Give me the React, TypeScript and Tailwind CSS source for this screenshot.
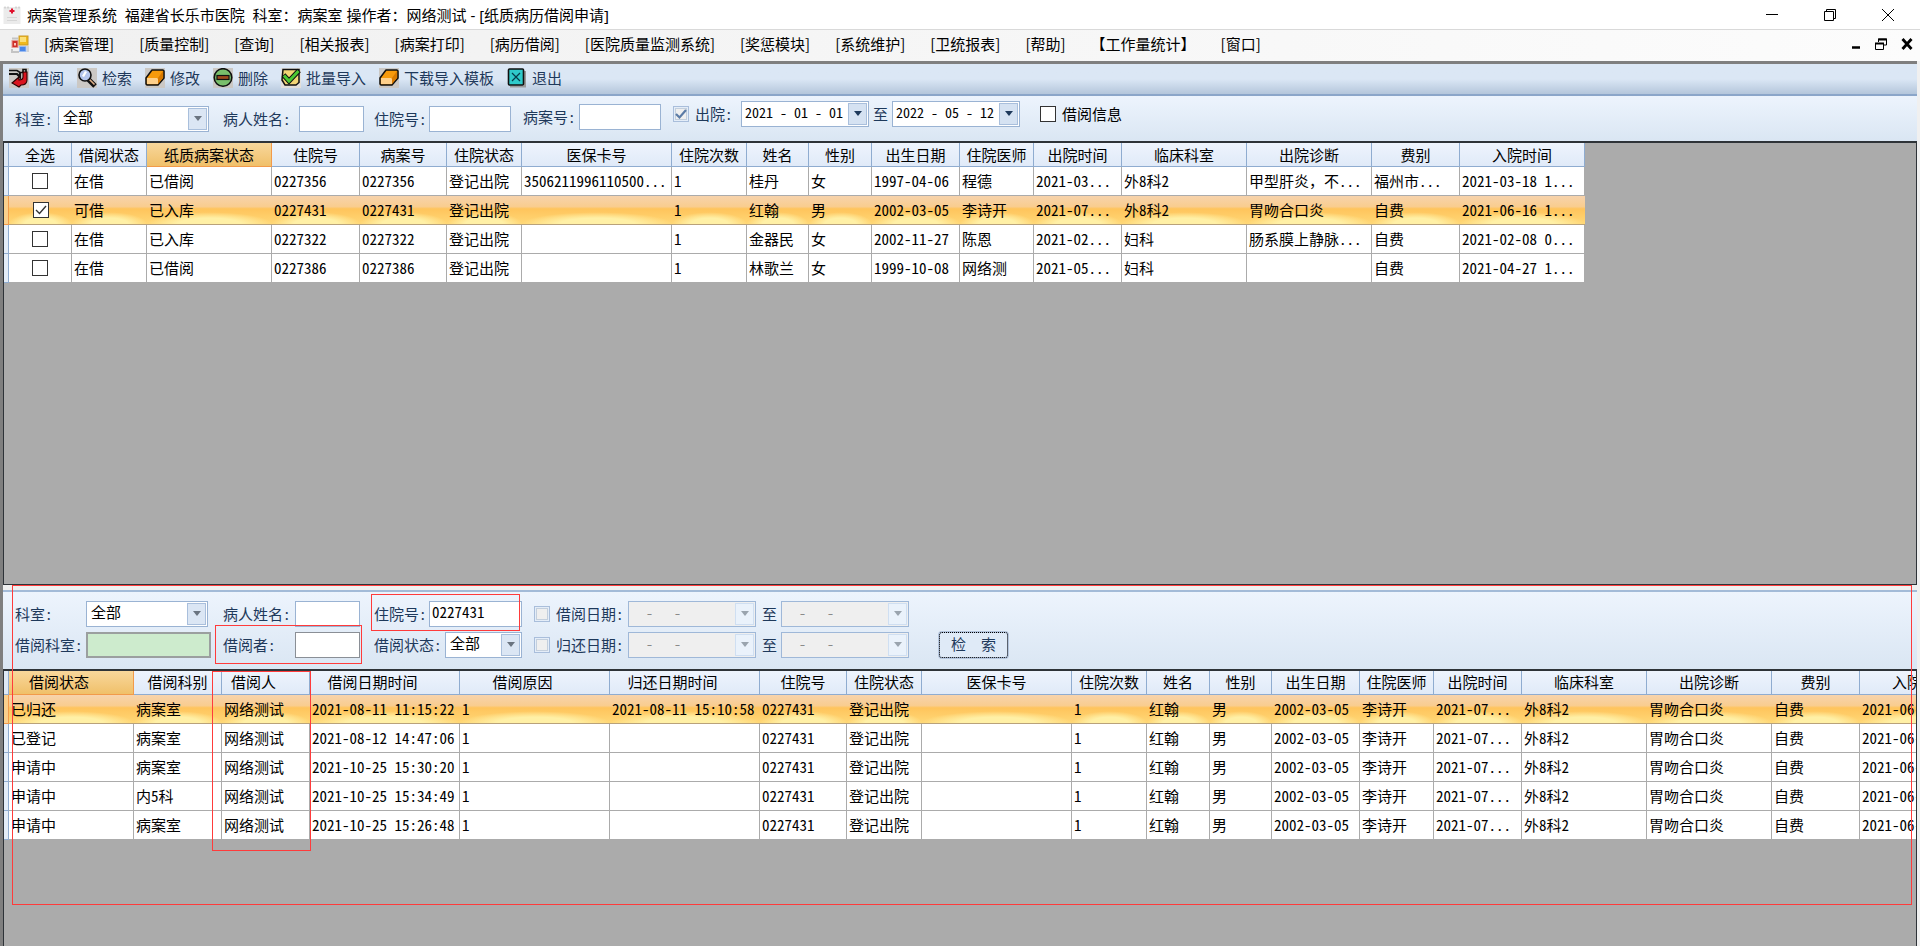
import type { ReactNode } from "react";

type Column = { title: string; width: number; sorted?: boolean; glyph?: boolean };

const MENUS = ["[病案管理]", "[质量控制]", "[查询]", "[相关报表]", "[病案打印]", "[病历借阅]", "[医院质量监测系统]", "[奖惩模块]", "[系统维护]", "[卫统报表]", "[帮助]", "【工作量统计】", "[窗口]"];

const TOP_COLUMNS: Column[] = [
  { title: "全选", width: 63 },
  { title: "借阅状态", width: 75 },
  { title: "纸质病案状态", width: 125, sorted: true },
  { title: "住院号", width: 88 },
  { title: "病案号", width: 87 },
  { title: "住院状态", width: 75 },
  { title: "医保卡号", width: 150 },
  { title: "住院次数", width: 75 },
  { title: "姓名", width: 62 },
  { title: "性别", width: 63 },
  { title: "出生日期", width: 88 },
  { title: "住院医师", width: 74 },
  { title: "出院时间", width: 88 },
  { title: "临床科室", width: 125 },
  { title: "出院诊断", width: 125 },
  { title: "费别", width: 88 },
  { title: "入院时间", width: 125 },
];

const TOP_ROWS = [
  ["在借", "已借阅", "0227356", "0227356", "登记出院", "3506211996110500...", "1", "桂丹", "女", "1997-04-06", "程德", "2021-03...", "外8科2", "甲型肝炎，不...", "福州市...", "2021-03-18 1..."],
  ["可借", "已入库", "0227431", "0227431", "登记出院", "", "1", "红翰", "男", "2002-03-05", "李诗开", "2021-07...", "外8科2", "胃吻合口炎", "自费", "2021-06-16 1..."],
  ["在借", "已入库", "0227322", "0227322", "登记出院", "", "1", "金器民", "女", "2002-11-27", "陈恩", "2021-02...", "妇科", "肠系膜上静脉...", "自费", "2021-02-08 0..."],
  ["在借", "已借阅", "0227386", "0227386", "登记出院", "", "1", "林歌兰", "女", "1999-10-08", "网络测", "2021-05...", "妇科", "", "自费", "2021-04-27 1..."],
];

const BOTTOM_COLUMNS: Column[] = [
  { title: "借阅状态", width: 125, sorted: true, glyph: true },
  { title: "借阅科别", width: 88 },
  { title: "借阅人", width: 88, glyph: true },
  { title: "借阅日期时间", width: 150, glyph: true },
  { title: "借阅原因", width: 150, glyph: true },
  { title: "归还日期时间", width: 150, glyph: true },
  { title: "住院号", width: 87 },
  { title: "住院状态", width: 75 },
  { title: "医保卡号", width: 150 },
  { title: "住院次数", width: 75 },
  { title: "姓名", width: 63 },
  { title: "性别", width: 62 },
  { title: "出生日期", width: 88 },
  { title: "住院医师", width: 74 },
  { title: "出院时间", width: 88 },
  { title: "临床科室", width: 125 },
  { title: "出院诊断", width: 125 },
  { title: "费别", width: 88 },
  { title: "入院时间", width: 125 },
];

const PATIENT = ["0227431", "登记出院", "", "1", "红翰", "男", "2002-03-05", "李诗开", "2021-07...", "外8科2", "胃吻合口炎", "自费", "2021-06-16 1..."];

const BOTTOM_ROWS = [
  ["已归还", "病案室", "网络测试", "2021-08-11 11:15:22", "1", "2021-08-11 15:10:58", ...PATIENT],
  ["已登记", "病案室", "网络测试", "2021-08-12 14:47:06", "1", "", ...PATIENT],
  ["申请中", "病案室", "网络测试", "2021-10-25 15:30:20", "1", "", ...PATIENT],
  ["申请中", "内5科", "网络测试", "2021-10-25 15:34:49", "1", "", ...PATIENT],
  ["申请中", "病案室", "网络测试", "2021-10-25 15:26:48", "1", "", ...PATIENT],
];

function AppIcon() {
  return (
    <svg viewBox="0 0 18 18" className="h-[18px] w-[18px]">
      <rect x="0.500" y="1" width="17" height="17" fill="#ebebeb" />
      <path d="M2 0.500v2M5 0.500v2M13 0.500v2M16 0.500v2" stroke="#bdbdbd" />
      <path d="M9 2.500v5M6.500 5h5" stroke="#e0102c" strokeWidth="2" />
      <path d="M4 11.500h10M4 14.500h10" stroke="#d6d6d6" />
    </svg>
  );
}

function FormIcon() {
  return (
    <svg viewBox="0 0 18 18" className="h-[18px] w-[18px]">
      <path d="M1 3.500h6M1 14v3h7" fill="none" stroke="#c4c4c4" strokeWidth="2" />
      <rect x="1" y="5.500" width="6" height="7" fill="#cf2f28" stroke="#e59a94" />
      <rect x="3" y="8" width="2" height="2.500" fill="#f8c5bf" />
      <rect x="8" y="1" width="9" height="9" fill="#f0b91c" stroke="#c99a2a" />
      <rect x="9" y="2" width="6" height="5" fill="#fbe07a" />
      <rect x="8.500" y="11.500" width="6.500" height="5" fill="#4a87e8" stroke="#9cbcf0" />
      <path d="M17 11v6" stroke="#b5b5b5" />
    </svg>
  );
}

function BorrowIcon() {
  return (
    <svg viewBox="0 0 20 20" className="h-5 w-5">
      <rect width="20" height="20" fill="#cbc8c4" />
      <path d="M0 2.500h8l3 2h3V1.500h3V6" fill="none" stroke="#111" strokeWidth="1.600" />
      <path d="M0 6h8l3 3V5" fill="none" stroke="#111" strokeWidth="2.200" />
      <path d="M14 4h4v8q0 5-6 5l-2 2-7-4 7-6v3q4 0 4-3z" fill="#d9141e" stroke="#2a0000" strokeWidth="1.100" />
    </svg>
  );
}

function SearchIcon() {
  return (
    <svg viewBox="0 0 20 20" className="h-5 w-5">
      <rect width="20" height="20" fill="#cbc8c4" />
      <path d="M11.500 11.500l6.500 6.500" stroke="#111" strokeWidth="5" />
      <path d="M12.500 11.500l5 5" stroke="#e0b088" strokeWidth="1.600" />
      <circle cx="8" cy="7" r="6" fill="#b5c6ee" stroke="#111" strokeWidth="1.600" />
      <path d="M5 8l3-5 2 1-3 5z" fill="#fff" />
    </svg>
  );
}

function EraserIcon() {
  return (
    <svg viewBox="0 0 20 20" className="h-5 w-5">
      <rect width="20" height="20" fill="#cbc8c4" />
      <path d="M1 10L7 2h11l1 1v7l-6 7H2l-1-1z" fill="#f79a0c" stroke="#111" strokeWidth="1.500" strokeLinejoin="round" />
      <path d="M2 10h10l1 1v5H2z" fill="#ffd08a" />
      <path d="M13 10l5-7v7l-5 6z" fill="#d97a00" />
    </svg>
  );
}

function DeleteIcon() {
  return (
    <svg viewBox="0 0 20 20" className="h-5 w-5">
      <rect width="20" height="20" fill="#cbc8c4" />
      <circle cx="10" cy="9.500" r="8.800" fill="#79bf6c" stroke="#111" strokeWidth="1.600" />
      <rect x="4" y="7.500" width="12" height="4" fill="#9b4a1c" stroke="#111" strokeWidth="1.200" />
    </svg>
  );
}

function CheckIcon() {
  return (
    <svg viewBox="0 0 20 20" className="h-5 w-5">
      <rect width="20" height="20" fill="#e2dfda" />
      <path d="M2 1.500h16v13l-3 2.500H4l-3-5z" fill="#f3d675" stroke="#111" strokeWidth="1.500" />
      <path d="M2.500 7l5.500 6L18 2.500" fill="none" stroke="#111" strokeWidth="5" />
      <path d="M3 7.500l5 5.500L17.500 3" fill="none" stroke="#4cc832" strokeWidth="3" />
    </svg>
  );
}

function ExitIcon() {
  return (
    <svg viewBox="0 0 20 20" className="h-5 w-5">
      <path d="M3 18.500h15V3" fill="none" stroke="#9a9a9a" strokeWidth="2" />
      <rect x="1.500" y="1" width="15" height="16" rx="1" fill="#2fcaca" stroke="#111" strokeWidth="1.600" />
      <path d="M5 5l8 8M13 5l-8 8" stroke="#063c4a" strokeWidth="1.200" />
    </svg>
  );
}

const TOOLS: { label: string; icon: ReactNode }[] = [
  { label: "借阅", icon: <BorrowIcon /> },
  { label: "检索", icon: <SearchIcon /> },
  { label: "修改", icon: <EraserIcon /> },
  { label: "删除", icon: <DeleteIcon /> },
  { label: "批量导入", icon: <CheckIcon /> },
  { label: "下载导入模板", icon: <EraserIcon /> },
  { label: "退出", icon: <ExitIcon /> },
];

function Arrow({ color = "#3d5f8c" }: { color?: string }) {
  return (
    <svg viewBox="0 0 8 5" className="h-[5px] w-2">
      <path d="M0 0h8L4 5z" fill={color} />
    </svg>
  );
}

function SelectBox({ id, className }: { id: string; className: string }) {
  return (
    <div className={`relative h-[26px] border border-[#9ab3d3] bg-white ${className}`}>
      <select id={id} className="h-full w-full appearance-none bg-transparent pb-1 pl-1 text-[15px] leading-5 text-black outline-none">
        <option>全部</option>
      </select>
      <span className="pointer-events-none absolute top-px right-px flex h-[22px] w-[19px] items-center justify-center border border-[#a9bfdc] bg-[#dbe6f4]">
        <Arrow color="#6a7480" />
      </span>
    </div>
  );
}

function DateBox({ label, value, disabled }: { label: string; value: string; disabled?: boolean }) {
  return (
    <div className={`flex h-[26px] w-32 border ${disabled ? "border-[#9fb8d8] bg-[#efefef]" : "border-[#9ab3d3] bg-white"}`}>
      <input
        aria-label={label}
        defaultValue={value}
        disabled={disabled}
        className="min-w-0 flex-1 bg-transparent pb-1 pl-[3px] text-sm whitespace-pre text-black outline-none disabled:text-[#8a8a8a]"
      />
      <button
        type="button"
        aria-label={`选择${label}`}
        disabled={disabled}
        className="m-px flex w-[19px] items-center justify-center border border-[#a9bfdc] bg-[#d5e2f2] disabled:border-[#cfdff2] disabled:bg-[#eaf2fb]"
      >
        <Arrow color={disabled ? "#9aa4ae" : "#1e395b"} />
      </button>
    </div>
  );
}

function TickBox({ id, label, checked, disabled, plain }: { id: string; label?: string; checked?: boolean; disabled?: boolean; plain?: boolean }) {
  return (
    <span className="relative flex h-4 w-4 shrink-0">
      <input
        id={id}
        type="checkbox"
        aria-label={label}
        defaultChecked={checked}
        disabled={disabled}
        className={`h-4 w-4 appearance-none border ${plain ? "border-[#333] bg-white" : "border-[#a9bedb] bg-[#efefef] shadow-[inset_0_0_0_1px_#e4edf8,inset_0_0_0_2px_#c3cfdd]"}`}
      />
      {checked && (
        <svg viewBox="0 0 16 16" className="pointer-events-none absolute inset-0 h-4 w-4">
          <path d="M3 8l3.500 3.500L13 4" fill="none" stroke={plain ? "#333" : "#5b7ba6"} strokeWidth={plain ? 1.4 : 2.2} />
        </svg>
      )}
    </span>
  );
}

// half-width forms would also shrink the Chinese comma, so it is kept full width
function CellText({ text }: { text: string }) {
  const [head, tail] = text.split("，");
  if (tail === undefined) return <>{text}</>;
  return (
    <>
      {head}
      <span className="[font-feature-settings:normal]">，</span>
      {tail}
    </>
  );
}

function DataGrid({ name, columns, rows, selected, checks }: { name: string; columns: Column[]; rows: string[][]; selected: number; checks?: boolean }) {
  const total = columns.reduce((sum, c) => sum + c.width, 5);
  return (
    <table aria-label={name} className="table-fixed border-separate border-spacing-0 text-[15px] leading-5 text-black" style={{ width: total }}>
      <colgroup>
        <col className="w-[5px]" />
        {columns.map((c) => (
          <col key={c.title} style={{ width: c.width }} />
        ))}
      </colgroup>
      <thead>
        <tr className="h-6">
          <td className="border-r border-b border-[#8facd0] bg-[#dfe9f5] p-0" />
          {columns.map((c) => (
            <th
              key={c.title}
              scope="col"
              className={`overflow-hidden border-r border-b p-0 text-center font-normal whitespace-nowrap ${c.glyph ? "pr-6" : ""} ${
                c.sorted ? "border-[#f29a4a] bg-linear-to-b from-[#f8d79b] to-[#f0c069]" : "border-[#8facd0] bg-linear-to-b from-[#eef4fd] to-[#e0eaf8]"
              }`}
            >
              {c.title}
            </th>
          ))}
        </tr>
      </thead>
      <tbody>
        {rows.map((row, i) => {
          const on = i === selected;
          const cell = on
            ? "border-b border-[#b9a27a] bg-[radial-gradient(ellipse_50%_42%_at_50%_100%,#fff0a6_50%,transparent_100%),linear-gradient(to_bottom,#f7d3ac_0%,#f9cd8f_38%,#ffc45c_46%,#ffd877_100%)]"
            : "border-r border-b border-[#ababab] bg-white";
          return (
            <tr key={i} className="h-[29px]">
              <td className={`border-r border-b p-0 ${on ? "border-[#f29a4a] bg-[#fbd08d]" : "border-[#8facd0] bg-[#e4edf8]"}`} />
              {checks && (
                <td className={`p-0 ${cell}`}>
                  <div className="flex justify-center">
                    <TickBox id={`row-${i}`} label={`选择 ${row[2]}`} checked={on} plain />
                  </div>
                </td>
              )}
              {row.map((text, j) => (
                <td key={j} className={`overflow-hidden p-0 pl-[2px] whitespace-nowrap ${cell}`}>
                  <CellText text={text} />
                </td>
              ))}
            </tr>
          );
        })}
      </tbody>
    </table>
  );
}

const FIELD = "h-[26px] border border-[#9ab3d3] bg-white pl-[2px] pb-1 text-[15px] text-black outline-none";

export default function App() {
  return (
    <div className="flex h-screen flex-col overflow-hidden bg-[#f0f0f0] font-['Noto_Sans_CJK_SC',sans-serif] text-[15px] leading-5 text-black">
      <header className="flex h-[29px] shrink-0 items-center bg-white pl-[3px]">
        <AppIcon />
        <h1 className="ml-[6px] font-['Noto_Sans','Noto_Sans_CJK_SC',sans-serif] whitespace-pre">病案管理系统  福建省长乐市医院  科室：病案室 操作者：网络测试 - [纸质病历借阅申请]</h1>
        <div className="ml-auto flex items-center gap-[46px] pr-[26px]">
          <button type="button" aria-label="最小化">
            <svg viewBox="0 0 12 12" className="h-3 w-3"><path d="M0 5.500h12" stroke="#000" /></svg>
          </button>
          <button type="button" aria-label="还原">
            <svg viewBox="0 0 12 12" className="h-3 w-3"><path d="M.5 2.500h9v9h-9zM2.500 2.500v-2h9v9h-2" fill="none" stroke="#000" /></svg>
          </button>
          <button type="button" aria-label="关闭">
            <svg viewBox="0 0 12 12" className="h-3 w-3"><path d="M0 0l12 12M12 0L0 12" stroke="#000" /></svg>
          </button>
        </div>
      </header>

      <nav className="flex h-8 shrink-0 items-center border-t border-[#d9d9d9] bg-linear-to-r from-[#f0f0f0] to-[#fcfcfc] pb-[3px] pl-[11px]">
        <FormIcon />
        <ul className="ml-[15px] flex gap-[25px] whitespace-nowrap">
          {MENUS.map((m) => (
            <li key={m}>
              <button type="button">{m}</button>
            </li>
          ))}
        </ul>
        <div className="ml-auto flex items-center gap-[14px] pr-[7px]">
          <button type="button" aria-label="最小化子窗口">
            <svg viewBox="0 0 10 12" className="h-3 w-[10px]"><path d="M1 9.500h8" stroke="#000" strokeWidth="2.500" /></svg>
          </button>
          <button type="button" aria-label="还原子窗口">
            <svg viewBox="0 0 12 12" className="h-3 w-3"><path d="M3.500 4V1h8v6H9" fill="none" stroke="#000" /><path d="M3 1.500h9M0 5.500h9" stroke="#000" strokeWidth="2" /><path d="M.5 5v6.500h8V5" fill="none" stroke="#000" /></svg>
          </button>
          <button type="button" aria-label="关闭子窗口">
            <svg viewBox="0 0 12 12" className="h-3 w-3"><path d="M1.500 1l9 10M10.500 1l-9 10" stroke="#000" strokeWidth="2.800" /></svg>
          </button>
        </div>
      </nav>

      <main className="mr-[3px] flex min-h-0 flex-1 flex-col border-t-[3px] border-l-[3px] border-[#7f7f7f] text-[#1e395b] [font-feature-settings:'hwid']">
        <div className="flex h-8 shrink-0 items-center gap-[13px] border-b-2 border-[#8ba6c9] bg-linear-to-b from-[#dbe7f5] from-50% to-[#b4c6db] pb-[2px] pl-[6px]">
          {TOOLS.map((t) => (
            <button key={t.label} type="button" className="flex items-center gap-[5px] whitespace-nowrap">
              {t.icon}
              {t.label}
            </button>
          ))}
        </div>

        <form className="flex h-[47px] shrink-0 items-center border-b-2 border-[#2e3338] bg-linear-to-b from-[#edf4fd] to-[#dae6f3] pl-3 whitespace-nowrap">
          <label htmlFor="dept" className="w-[43px]">科室:</label>
          <SelectBox id="dept" className="w-[151px]" />
          <label htmlFor="patient" className="ml-[14px] w-[76px]">病人姓名:</label>
          <input id="patient" className={`w-[65px] ${FIELD}`} />
          <label htmlFor="admission" className="ml-[10px] w-[55px]">住院号:</label>
          <input id="admission" className={`w-[82px] ${FIELD}`} />
          <div className="ml-3 flex items-center pb-1">
            <label htmlFor="record" className="w-[56px]">病案号:</label>
            <input id="record" className={`w-[82px] ${FIELD}`} />
          </div>
          <div className="ml-3 flex items-center pb-[10px]">
            <TickBox id="discharge" checked disabled />
            <label htmlFor="discharge" className="ml-[6px] w-[46px]">出院:</label>
            <DateBox label="出院起始日期" value="2021 - 01 - 01" />
            <span className="w-[23px] text-center">至</span>
            <DateBox label="出院截止日期" value="2022 - 05 - 12" />
            <span className="ml-5 flex items-center gap-[6px] text-black">
              <TickBox id="info" plain />
              <label htmlFor="info">借阅信息</label>
            </span>
          </div>
        </form>

        <section className="min-h-0 flex-[8] overflow-hidden border-r border-b border-l border-[#2e3338] bg-[#ababab]">
          <DataGrid name="病案列表" columns={TOP_COLUMNS} rows={TOP_ROWS} selected={1} checks />
        </section>

        <div className="h-[5px] shrink-0 bg-[#f0f0f0]" />

        <form className="grid h-[81px] shrink-0 grid-cols-[208px_151px_160px_228px_176px_1fr] grid-rows-[26px_26px] items-center gap-y-[5px] border-t-2 border-b-2 border-t-[#a3bbd8] border-b-[#2e3338] bg-linear-to-b from-[#edf4fd] to-[#dae6f3] pt-[9px] pl-3 whitespace-nowrap">
          <div className="flex items-center">
            <label htmlFor="dept2" className="w-[71px]">科室:</label>
            <SelectBox id="dept2" className="w-[122px]" />
          </div>
          <div className="flex items-center">
            <label htmlFor="patient2" className="w-[72px]">病人姓名:</label>
            <input id="patient2" className={`w-[65px] ${FIELD}`} />
          </div>
          <div className="flex items-center">
            <label htmlFor="admission2" className="w-[55px]">住院号:</label>
            <input id="admission2" defaultValue="0227431" className={`w-[93px] ${FIELD}`} />
          </div>
          <div className="flex items-center">
            <TickBox id="borrowed" disabled />
            <label htmlFor="borrowed" className="ml-[6px] w-[72px]">借阅日期:</label>
            <DateBox label="借阅起始日期" value="  -   -" disabled />
          </div>
          <div className="flex items-center">
            <span className="w-[19px]">至</span>
            <DateBox label="借阅截止日期" value="  -   -" disabled />
          </div>
          <div />

          <div className="flex items-center">
            <label htmlFor="borrowDept" className="w-[71px]">借阅科室:</label>
            <input id="borrowDept" className="h-[26px] w-[125px] border-2 border-[#9b9f9f] bg-[#cdebcd] outline-none" />
          </div>
          <div className="flex items-center">
            <label htmlFor="borrower" className="w-[72px]">借阅者:</label>
            <input id="borrower" className="h-[26px] w-[65px] border border-[#8a8f96] bg-white outline-none" />
          </div>
          <div className="flex items-center">
            <label htmlFor="status" className="w-[71px]">借阅状态:</label>
            <SelectBox id="status" className="w-[77px]" />
          </div>
          <div className="flex items-center">
            <TickBox id="returned" disabled />
            <label htmlFor="returned" className="ml-[6px] w-[72px]">归还日期:</label>
            <DateBox label="归还起始日期" value="  -   -" disabled />
          </div>
          <div className="flex items-center">
            <span className="w-[19px]">至</span>
            <DateBox label="归还截止日期" value="  -   -" disabled />
          </div>
          <div className="flex items-center">
            <button type="button" className="flex h-7 w-[71px] items-center justify-center gap-[15px] rounded-sm border-2 border-[#b4c5dd] bg-[#dfeaf7] pb-[2px] outline-1 -outline-offset-2 outline-black outline-dotted">
              <span>检</span>
              <span>索</span>
            </button>
          </div>
        </form>

        <section className="min-h-0 flex-[5] overflow-hidden border-r border-l border-[#2e3338] bg-[#ababab]">
          <DataGrid name="借阅记录" columns={BOTTOM_COLUMNS} rows={BOTTOM_ROWS} selected={0} />
        </section>
      </main>

      {/* red review marks drawn over the lower pane */}
      <div className="pointer-events-none absolute top-[585px] right-2 left-3 h-[320px] border border-[#ff3b3b]" />
      <div className="pointer-events-none absolute top-[594px] left-[371px] h-[37px] w-[149px] border border-[#ff3b3b]" />
      <div className="pointer-events-none absolute top-[625px] left-[215px] h-[39px] w-[147px] border border-[#ff3b3b]" />
      <div className="pointer-events-none absolute top-[671px] left-[212px] h-[180px] w-[99px] border border-[#ff3b3b]" />
    </div>
  );
}
